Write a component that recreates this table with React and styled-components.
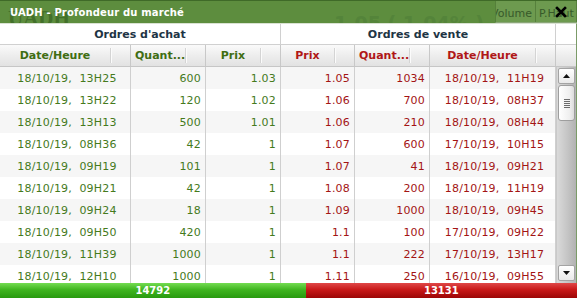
import styled, { createGlobalStyle } from 'styled-components';

const GlobalStyle = createGlobalStyle`
  html, body {
    margin: 0;
    padding: 0;
    background: #7b9b68;
  }
  * {
    box-sizing: border-box;
  }
`;

const buyOrders = [
  ['18/10/19,  13H25', '600', '1.03'],
  ['18/10/19,  13H22', '120', '1.02'],
  ['18/10/19,  13H13', '500', '1.01'],
  ['18/10/19,  08H36', '42', '1'],
  ['18/10/19,  09H19', '101', '1'],
  ['18/10/19,  09H21', '42', '1'],
  ['18/10/19,  09H24', '18', '1'],
  ['18/10/19,  09H50', '420', '1'],
  ['18/10/19,  11H39', '1000', '1'],
  ['18/10/19,  12H10', '1000', '1'],
];

const sellOrders = [
  ['1.05', '1034', '18/10/19,  11H19'],
  ['1.06', '700', '18/10/19,  08H37'],
  ['1.06', '210', '18/10/19,  08H44'],
  ['1.07', '600', '17/10/19,  10H15'],
  ['1.07', '41', '18/10/19,  09H21'],
  ['1.08', '200', '18/10/19,  11H19'],
  ['1.09', '1000', '18/10/19,  09H45'],
  ['1.1', '100', '17/10/19,  09H22'],
  ['1.1', '222', '17/10/19,  13H17'],
  ['1.11', '250', '16/10/19,  09H55'],
];

const COLS = '131px 75px 75px 74px 75px 126px';
const BUY = '#457a1c';
const SELL = '#a31414';

const Window = styled.div`
  width: 577px;
  height: 298px;
  display: flex;
  flex-direction: column;
  overflow: hidden;
  font-family: 'DejaVu Sans', Verdana, sans-serif;
  font-size: 11px;
`;

const TitleBar = styled.div`
  position: relative;
  height: 23px;
  flex: none;
  overflow: hidden;
  background: #5d8d3e;
  border-top: 1px solid #3f6a28;
  display: flex;
  align-items: center;
  padding-left: 10px;
`;

// faded widgets of the quote panel that sits behind this window
const GhostText = styled.span`
  position: absolute;
  top: ${(p) => p.$top}px;
  left: ${(p) => p.$left}px;
  font-size: ${(p) => p.$size}px;
  font-weight: bold;
  color: ${(p) => (p.$serif ? '#42702a' : '#54843a')};
  white-space: pre;
  font-family: ${(p) =>
    p.$serif ? "'Liberation Serif', serif" : "'DejaVu Sans', sans-serif"};
`;

const Title = styled.span`
  position: relative;
  color: #fff;
  font-weight: bold;
  font-size: 10px;
  letter-spacing: 0.15px;
`;

const TabStrip = styled.div`
  position: absolute;
  top: -1px;
  right: 0;
  height: 23px;
  display: flex;
  background: #6d9a4f;
  border-left: 1px solid #55803a;
  border-bottom: 1px solid #8aa678;
`;

const Tab = styled.span`
  display: flex;
  align-items: center;
  padding: 4px 3px 0;
  width: ${(p) => p.$width}px;
  overflow: hidden;
  justify-content: ${(p) => (p.$clip ? 'flex-end' : 'flex-start')};
  color: #37592a;
  font-size: 11px;
  border-right: 1px solid #56803c;
  white-space: nowrap;
`;

const CloseButton = styled.span`
  position: absolute;
  top: 5px;
  right: 10px;
  width: 12px;
  height: 12px;
  display: flex;
`;

const GridPanel = styled.div`
  flex: 1;
  min-height: 0;
  background: #fff;
  display: flex;
  flex-direction: column;
  border-right: 1px solid #7b9b68;
  border-top: 1px solid #d9e2d2;
`;

const GroupRow = styled.div`
  display: grid;
  grid-template-columns: 281px 275px 1fr;
  height: 21px;
  flex: none;
  border-bottom: 1px solid #d0d0d0;
`;

const GroupCell = styled.div`
  display: flex;
  align-items: center;
  justify-content: center;
  font-weight: bold;
  color: #1e3444;
  border-right: 1px solid #d0d0d0;
  padding-top: 1px;
`;

const HeaderRow = styled.div`
  display: grid;
  grid-template-columns: ${COLS} 1fr;
  height: 22px;
  flex: none;
  background: linear-gradient(#fafafa, #ececec 55%, #e2e2e2);
  border-bottom: 1px solid #c6c6c6;
`;

const HeaderCell = styled.div`
  position: relative;
  display: flex;
  align-items: center;
  justify-content: ${(p) => (p.$left ? 'flex-start' : 'center')};
  padding: 0 ${(p) => (p.$left ? '20px 0 4px' : '20px 0 0')};
  font-weight: bold;
  color: ${(p) => (p.$side === 'buy' ? '#3f6d12' : '#b01717')};
  border-right: 1px solid #c8c8c8;

  &::after {
    content: '';
    position: absolute;
    right: 19px;
    top: 3px;
    bottom: 3px;
    width: 1px;
    background: #d4d4d4;
    box-shadow: 1px 0 0 #fbfbfb;
  }
`;

const BodyWrap = styled.div`
  flex: 1;
  min-height: 0;
  display: flex;
  overflow: hidden;
`;

const Rows = styled.div`
  width: 556px;
  flex: none;
`;

const Row = styled.div`
  display: grid;
  grid-template-columns: ${COLS};
  height: 22px;
  background: ${(p) => (p.$alt ? '#f6f6f6' : '#fff')};
`;

const Cell = styled.div`
  display: flex;
  align-items: center;
  justify-content: ${(p) => (p.$align === 'right' ? 'flex-end' : 'center')};
  padding: ${(p) => (p.$align === 'right' ? '0 4px 0 0' : '0 0 0 4px')};
  color: ${(p) => (p.$side === 'buy' ? BUY : SELL)};
  border-right: 1px solid #cfcfcf;
  white-space: pre;
  letter-spacing: 0.2px;
`;

const Scrollbar = styled.div`
  width: 20px;
  flex: none;
  display: flex;
  flex-direction: column;
  background: linear-gradient(90deg, #dadada, #c3c3c3 60%, #b2b2b2);
  border-left: 1px solid #c9c9c9;
`;

const ScrollButton = styled.div`
  height: 16px;
  flex: none;
  margin: 1px 1px ${(p) => (p.$down ? '2px' : '0')};
  background: linear-gradient(#ffffff, #e9e9e9);
  border: 1px solid #a3a3a3;
  border-radius: 2px;
  display: flex;
  align-items: center;
  justify-content: center;
`;

const Thumb = styled.div`
  height: 36px;
  flex: none;
  margin: 1px 1px 0;
  background: linear-gradient(90deg, #ffffff, #efefef 70%, #dcdcdc);
  border: 1px solid #9e9e9e;
  border-radius: 3px;
  display: flex;
  flex-direction: column;
  align-items: center;
  justify-content: center;
  gap: 1px;
`;

const Grip = styled.span`
  width: 6px;
  height: 1px;
  background: #6c6c6c;
`;

const Track = styled.div`
  flex: 1;
`;

const DepthBar = styled.div`
  height: 15px;
  flex: none;
  display: flex;
`;

const DepthSegment = styled.div`
  flex: ${(p) => p.$weight} 1 0;
  display: flex;
  align-items: center;
  justify-content: center;
  color: #fff;
  font-weight: bold;
  font-size: 10px;
  background: ${(p) =>
    p.$side === 'buy'
      ? 'linear-gradient(#74dc52, #3fb51f 45%, #289a0f)'
      : 'linear-gradient(#e04848, #c81818 45%, #9c0606)'};
`;

function Triangle({ down }) {
  return (
    <svg width="7" height="4" viewBox="0 0 7 4">
      <path d={down ? 'M0 0 H7 L3.5 4 Z' : 'M0 4 H7 L3.5 0 Z'} fill="#111" />
    </svg>
  );
}

function App() {
  const buyTotal = 14792;
  const sellTotal = 13131;

  return (
    <>
      <GlobalStyle />
      <Window>
        <TitleBar>
          <GhostText $top={5} $left={8} $size={21} $serif>
            UADH
          </GhostText>
          <GhostText $top={11} $left={334} $size={19}>
            {'1.05 ( 1.04% )'}
          </GhostText>
          <Title>UADH - Profondeur du marché</Title>
          <TabStrip>
            <Tab $width={40} $clip>
              Volume
            </Tab>
            <Tab $width={41}>P.Haut</Tab>
          </TabStrip>
          <CloseButton>
            <svg width="12" height="12" viewBox="0 0 12 12">
              <path
                d="M2 2 L10 10 M10 2 L2 10"
                stroke="#000"
                strokeWidth="2.6"
                strokeLinecap="square"
              />
            </svg>
          </CloseButton>
        </TitleBar>

        <GridPanel>
          <GroupRow>
            <GroupCell>Ordres d'achat</GroupCell>
            <GroupCell>Ordres de vente</GroupCell>
            <div />
          </GroupRow>
          <HeaderRow>
            <HeaderCell $side="buy">Date/Heure</HeaderCell>
            <HeaderCell $side="buy" $left>
              Quant...
            </HeaderCell>
            <HeaderCell $side="buy">Prix</HeaderCell>
            <HeaderCell $side="sell">Prix</HeaderCell>
            <HeaderCell $side="sell" $left>
              Quant...
            </HeaderCell>
            <HeaderCell $side="sell">Date/Heure</HeaderCell>
            <div />
          </HeaderRow>
          <BodyWrap>
            <Rows>
              {buyOrders.map((buy, i) => {
                const sell = sellOrders[i];
                return (
                  <Row key={i} $alt={i % 2 === 0}>
                    <Cell $side="buy">{buy[0]}</Cell>
                    <Cell $side="buy" $align="right">
                      {buy[1]}
                    </Cell>
                    <Cell $side="buy" $align="right">
                      {buy[2]}
                    </Cell>
                    <Cell $side="sell" $align="right">
                      {sell[0]}
                    </Cell>
                    <Cell $side="sell" $align="right">
                      {sell[1]}
                    </Cell>
                    <Cell $side="sell">{sell[2]}</Cell>
                  </Row>
                );
              })}
            </Rows>
            <Scrollbar>
              <ScrollButton>
                <Triangle />
              </ScrollButton>
              <Thumb>
                <Grip />
                <Grip />
                <Grip />
                <Grip />
                <Grip />
              </Thumb>
              <Track />
              <ScrollButton $down>
                <Triangle down />
              </ScrollButton>
            </Scrollbar>
          </BodyWrap>
        </GridPanel>

        <DepthBar>
          <DepthSegment $side="buy" $weight={buyTotal}>
            {buyTotal}
          </DepthSegment>
          <DepthSegment $side="sell" $weight={sellTotal}>
            {sellTotal}
          </DepthSegment>
        </DepthBar>
      </Window>
    </>
  );
}

export default App;
